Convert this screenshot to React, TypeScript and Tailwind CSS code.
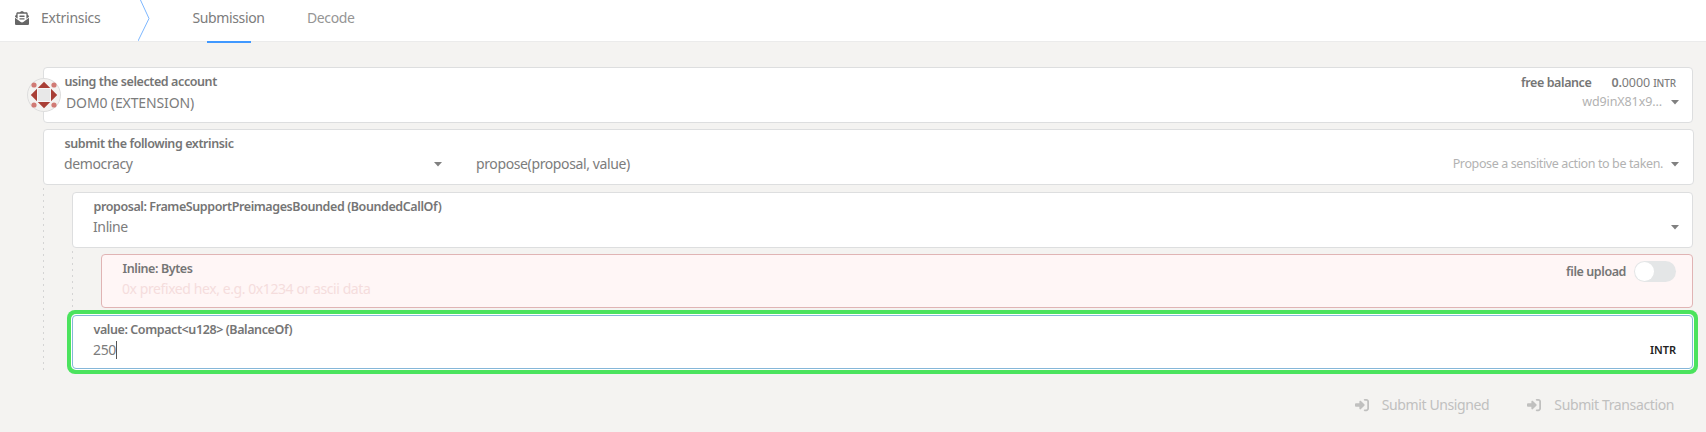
import React from "react";
import { FaEnvelopeOpenText } from "react-icons/fa";
import { FaRightToBracket } from "react-icons/fa6";

function Caret({ className = "" }: { className?: string }) {
  return (
    <svg className={`shrink-0 ${className}`} width="8" height="5" viewBox="0 0 8 5">
      <path d="M0 0h8L4 4.600z" fill="#808080" />
    </svg>
  );
}

function Label({ children }: { children: React.ReactNode }) {
  return (
    <div className="whitespace-nowrap pl-[0.5px] text-[12.5px] leading-[18px] font-semibold tracking-[-0.41px] text-[#757575]">
      {children}
    </div>
  );
}

function Identicon() {
  return (
    <svg className="absolute -left-[17px] top-[10px]" width="34" height="34" viewBox="0 0 34 34">
      <circle cx="17" cy="17" r="16.500" fill="#f4f3f1" stroke="#dddddd" />
      <path d="M17 3.800l6.700 6.700h-13.400zM17 30.200l6.700-6.700h-13.400zM3.800 17l6.700-6.700v13.400zM30.200 17l-6.700-6.700v13.400z" fill="#a93f36" />
      <rect x="10.500" y="10.500" width="13" height="13" fill="#e8e8e8" stroke="#f6f6f6" />
      <g fill="#d17a74">
        <circle cx="7" cy="7" r="2.600" />
        <circle cx="27" cy="7" r="2.600" />
        <circle cx="7" cy="27" r="2.600" />
        <circle cx="27" cy="27" r="2.600" />
      </g>
    </svg>
  );
}

export default function App() {
  return (
    <div className="h-[432px] w-[1706px] overflow-hidden bg-[#f4f3f1] font-['Noto_Sans',sans-serif] text-[14px] leading-5 tracking-[-0.38px] text-[#7c7c7c]">
      <header className="flex h-[42px] border-b border-[#ebebeb] bg-white">
        <div className="flex h-9 w-[138px] items-center pl-[15px]">
          <FaEnvelopeOpenText size={14} className="text-[#666]" />
          <span className="ml-3 tracking-[-0.25px]">Extrinsics</span>
        </div>
        <svg width="13" height="41" viewBox="0 0 13 41" fill="none">
          <path d="M2 -1L11 18.500L0 41" stroke="#7db7ff" />
        </svg>
        <nav className="flex">
          <div className="ml-[42px] flex h-[43px] w-[71px] flex-col items-center">
            <span className="flex h-9 items-center">Submission</span>
            <span className="mt-auto h-[2px] w-[44px] shrink-0 bg-[#4098ff]" />
          </div>
          <span className="ml-[43px] flex h-9 items-center text-[#959595]">Decode</span>
        </nav>
      </header>

      <main className="flex flex-col pl-[43px] pt-[25px]">
        <section className="relative flex h-14 w-[1650px] justify-between rounded border border-[#dddedf] bg-white pl-[20px] pr-[13px] pt-[5px]">
          <Identicon />
          <div>
            <Label>using the selected account</Label>
            <div className="mt-[2px] pl-[2px] tracking-[-0.13px]">DOM0 (EXTENSION)</div>
          </div>
          <div className="flex flex-col items-end">
            <div className="flex pr-[3px] pt-px">
              <Label>free balance</Label>
              <div className="ml-5 text-[12.5px] leading-[18px] tracking-[-0.1px]">
                <b className="font-semibold">0.</b>0000 <span className="text-[10px] font-medium">INTR</span>
              </div>
            </div>
            <div className="flex items-center text-[12.5px] leading-5 tracking-[-0.1px] text-[#b2b2b2]">
              wd9inX81x9…
              <Caret className="ml-[9px]" />
            </div>
          </div>
        </section>

        <section className="mt-[6px] h-14 w-[1651px] rounded border border-[#dddedf] bg-white pl-[20px] pr-[14px] pt-[5px]">
          <Label>submit the following extrinsic</Label>
          <div className="mt-px flex items-center">
            <span className="w-[370px]">democracy</span>
            <Caret />
            <span className="ml-[34px]">propose(proposal, value)</span>
            <span className="ml-auto text-[12.5px] text-[#b2b2b2]">Propose a sensitive action to be taken.</span>
            <Caret className="ml-[8px]" />
          </div>
        </section>

        <div className="flex">
          <div className="mt-[3px] h-[186px] w-px bg-[repeating-linear-gradient(to_bottom,#d4d4d4_0_2px,transparent_2px_6px)]" />
          <div className="ml-[28px] pt-[7px]">
            <section className="h-14 w-[1621px] rounded border border-[#dddedf] bg-white pl-[20px] pr-[13px] pt-[5px]">
              <Label>proposal: FrameSupportPreimagesBounded (BoundedCallOf)</Label>
              <div className="mt-px flex items-center justify-between">
                Inline
                <Caret />
              </div>
            </section>
            <div className="flex">
              <div className="mt-[3px] h-[57px] w-px bg-[repeating-linear-gradient(to_bottom,#d4d4d4_0_2px,transparent_2px_6px)]" />
              <section className="ml-[28px] mt-[6px] flex h-[54px] w-[1592px] justify-between rounded border border-[#e0b4b4] bg-[#fff6f6] pl-[20px] pr-[16px] pt-[5px]">
                <div>
                  <Label>Inline: Bytes</Label>
                  <div className="mt-px tracking-[-0.42px] text-[#f5dddd]">0x prefixed hex, e.g. 0x1234 or ascii data</div>
                </div>
                <div className="flex h-[23px] items-center">
                  <Label>file upload</Label>
                  <div className="ml-2 h-[21px] w-[42px] rounded-full bg-[#e4e6e7] p-px">
                    <div className="h-[19px] w-[19px] rounded-full bg-white" />
                  </div>
                </div>
              </section>
            </div>
            <section className="-ml-[5px] mt-[2px] h-[64px] w-[1631px] rounded-[8px] bg-[#4be35e] p-1">
              <div className="h-14 rounded-[5px] bg-white p-px">
                <div className="h-[54px] rounded border border-[#85b7d9] pl-[20px] pr-[16px] pt-[5px]">
                  <Label>value: Compact&lt;u128&gt; (BalanceOf)</Label>
                  <div className="mt-px flex items-center">
                    250
                    <span className="h-[18px] w-px bg-[#555]" />
                    <span className="ml-auto text-[11px] font-semibold tracking-normal text-[#222]">INTR</span>
                  </div>
                </div>
              </div>
            </section>
          </div>
        </div>

        <footer className="mt-[21px] flex w-[1631px] items-center justify-end text-[#c0c0bf]">
          <FaRightToBracket size={14} />
          <span className="ml-[13px]">Submit Unsigned</span>
          <FaRightToBracket size={14} className="ml-[38px]" />
          <span className="ml-[13px]">Submit Transaction</span>
        </footer>
      </main>
    </div>
  );
}
